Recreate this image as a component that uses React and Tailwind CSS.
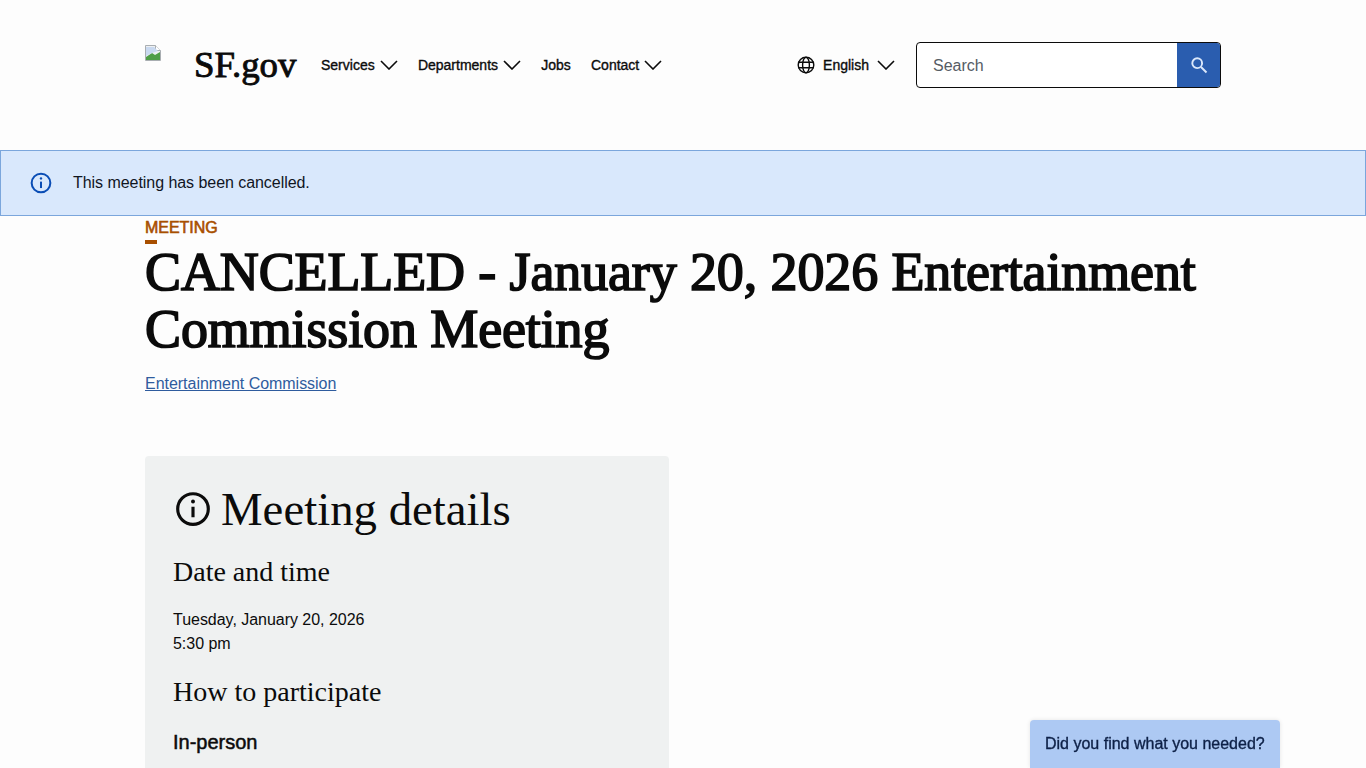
import React from "react";

const sans = { fontFamily: '"Liberation Sans", Arial, sans-serif' };
const serif = { fontFamily: '"Liberation Serif", "Times New Roman", serif' };
const Chevron = ({ className = "" }) => (
  <svg viewBox="0 0 18 10" width="18" height="10" fill="none" stroke="currentColor" strokeWidth="1.6" className={className}>
    <path d="M1 1l8 8 8-8" />
  </svg>
);
const Info = ({ size, sw, className = "" }) => (
  <svg viewBox="0 0 24 24" width={size} height={size} fill="none" stroke="currentColor" strokeWidth={sw} className={className}>
    <circle cx="12" cy="12" r="10.2" />
    <path d="M12 10.5v7" />
    <circle cx="12" cy="7" r="1.3" fill="currentColor" stroke="none" />
  </svg>
);
const Broken = () => (
  <svg viewBox="0 0 16 16" width="16" height="16" className="shrink-0">
    <path d="M.5.5h10l5 5v10H.5z" fill="#eef0f2" stroke="#a9aeb2" />
    <path d="M10.5.5v5h5" fill="#fff" stroke="#a9aeb2" />
    <path d="M1 15v-3l6-4 3 2 5-3v8z" fill="#4f9e47" />
    <path d="M1 11V2h8l4 4-6 2z" fill="#c9d9f0" />
  </svg>
);
const NavItem = ({ label, chevron = true }) => (
  <a className="flex items-center gap-[5px] text-[14px] text-[#0b0b0b] [-webkit-text-stroke:0.35px]">
    {label}
    {chevron && <Chevron />}
  </a>
);

export default function App() {
  return (
    <div className="min-h-screen bg-[#fdfdfd] text-[#0b0b0b]" style={sans}>
      <header className="h-[150px] px-[145px] pt-[42px]">
        <div className="flex h-[46px] items-center">
          <div className="flex w-[176px] items-center self-stretch">
            <div className="mt-[-25px] mr-[33px]"><Broken /></div>
            <span className="text-[36.8px] leading-none [-webkit-text-stroke:0.9px]" style={serif}>SF.gov</span>
          </div>
          <nav className="flex items-center gap-[20.2px]">
            <NavItem label="Services" />
            <NavItem label="Departments" />
            <NavItem label="Jobs" chevron={false} />
            <NavItem label="Contact" />
          </nav>
          <div className="ml-auto flex items-center">
            <div className="mr-[21px] flex items-center text-[14px] [-webkit-text-stroke:0.35px]">
              <svg viewBox="0 0 18 18" width="18" height="18" fill="none" stroke="#0b0b0b" strokeWidth="1.4" className="mr-[8px]">
                <circle cx="9" cy="9" r="7.8" />
                <ellipse cx="9" cy="9" rx="3.4" ry="7.8" />
                <path d="M1.4 6.3h15.2M1.4 11.7h15.2" />
              </svg>
              English
              <Chevron className="ml-[8px]" />
            </div>
            <div className="flex h-[46px] w-[305px] overflow-hidden rounded-[4px] border border-[#0b0b0b] bg-white">
              <div className="flex flex-1 items-center pl-[16px] pt-[1px] text-[16px] text-[#565c65]">Search</div>
              <div className="flex w-[43px] items-center justify-center bg-[#2a5daf]">
                <svg viewBox="0 0 18 18" width="18" height="18" fill="none" stroke="#dbe8fb" strokeWidth="1.9">
                  <circle cx="7.2" cy="7.2" r="4.9" />
                  <path d="M11 11l5.5 5.5" />
                </svg>
              </div>
            </div>
          </div>
        </div>
      </header>

      <div className="flex h-[66px] items-center border border-[#7ba6dc] bg-[#d9e8fc] pl-[29px]">
        <Info size={22} sw={2.2} className="text-[#0a4db5]" />
        <span className="ml-[21px] text-[16px] tracking-[-0.05px] text-[#10151f]">This meeting has been cancelled.</span>
      </div>

      <main className="px-[145px]">
        <div className="pt-[3px] text-[16px] leading-[18px] tracking-[-0.05px] text-[#a84f00] [-webkit-text-stroke:0.6px]">MEETING</div>
        <div className="mt-[3px] h-[4px] w-[12px] bg-[#a84f00]" />
        <h1 className="text-[54px] leading-[57px] tracking-[-0.12px] [-webkit-text-stroke:1.7px]" style={serif}>
          CANCELLED - January 20, 2026 Entertainment Commission Meeting
        </h1>
        <a className="mt-[14px] block text-[16px] leading-[24px] tracking-[-0.03px] text-[#2f5c9e] underline">Entertainment Commission</a>

        <section className="mt-[60px] h-[400px] w-[524px] rounded-[4px] bg-[#eff1f1] px-[28px] pt-[26px]">
          <h2 className="flex items-center text-[46.8px] leading-[54px]" style={serif}>
            <Info size={36} sw={2.1} className="ml-[2px] mr-[10px]" />
            Meeting details
          </h2>
          <h3 className="mt-[18px] text-[28px] leading-[36px]" style={serif}>Date and time</h3>
          <p className="mt-[18px] text-[16px] leading-[24px] tracking-[-0.03px]">Tuesday, January 20, 2026<br />5:30 pm</p>
          <h3 className="mt-[18px] text-[28px] leading-[36px]" style={serif}>How to participate</h3>
          <h4 className="mt-[18px] text-[20px] leading-[28px] [-webkit-text-stroke:0.5px]">In-person</h4>
        </section>
      </main>

      <div className="fixed bottom-0 left-[1030px] flex h-[48px] w-[250px] items-start rounded-t-[4px] bg-[#adc9f3] pl-[15px] pt-[13px] text-[16px] leading-[22px] text-[#0e2147] shadow-[0_0_4px_rgba(0,0,0,0.1)] [-webkit-text-stroke:0.35px]">
        Did you find what you needed?
      </div>
    </div>
  );
}
